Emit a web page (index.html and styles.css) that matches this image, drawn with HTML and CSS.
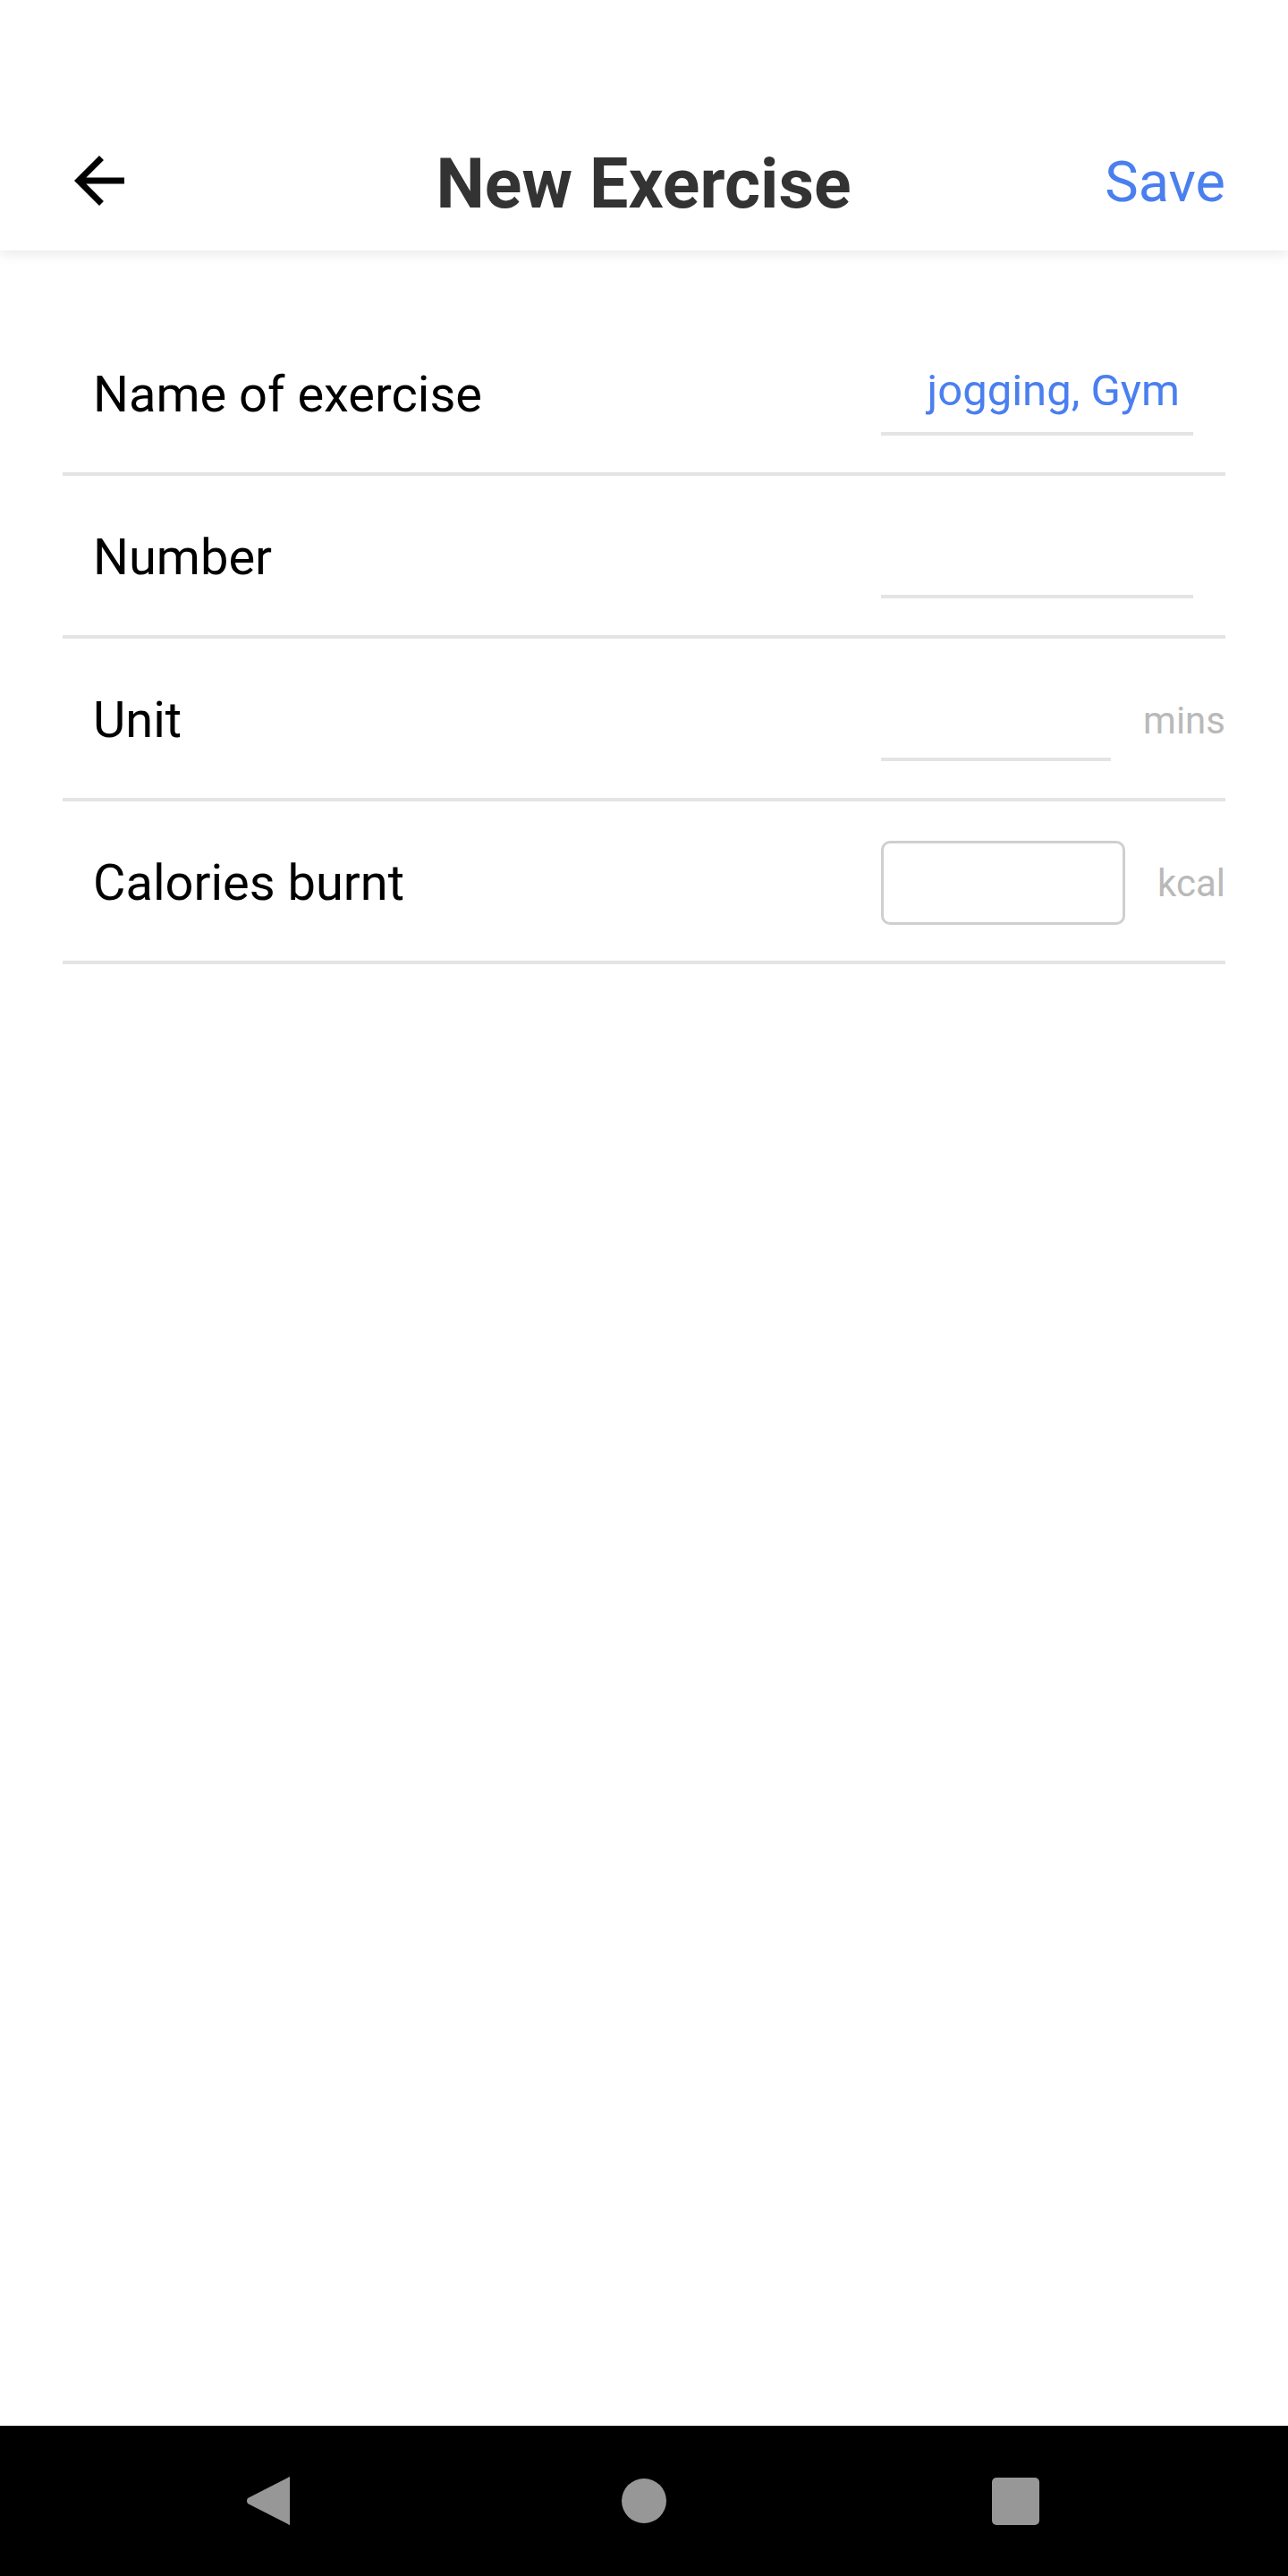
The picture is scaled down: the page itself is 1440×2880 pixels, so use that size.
FILE: index.html
```html
<!DOCTYPE html>
<html lang="en">
<head>
<meta charset="utf-8">
<title>New Exercise</title>
<link rel="stylesheet" href="styles.css">
</head>
<body>
<div class="screen">
  <header class="appbar">
    <button class="back" aria-label="Back">
      <svg viewBox="0 0 24 24" width="84" height="84"><path d="M20 11H7.83l5.59-5.59L12 4l-8 8 8 8 1.41-1.41L7.83 13H20v-2z" fill="#000"/></svg>
    </button>
    <h1 class="title">New Exercise</h1>
    <span class="save">Save</span>
  </header>
  <main class="form">
    <div class="row">
      <span class="label">Name of exercise</span>
      <div class="field pad">
        <input class="line" type="text" placeholder="jogging, Gym">
      </div>
    </div>
    <div class="row">
      <span class="label">Number</span>
      <div class="field pad">
        <input class="line" type="text">
      </div>
    </div>
    <div class="row">
      <span class="label">Unit</span>
      <div class="field">
        <input class="line" type="text">
        <span class="unit">mins</span>
      </div>
    </div>
    <div class="row">
      <span class="label">Calories burnt</span>
      <div class="field">
        <input class="box" type="text">
        <span class="unit">kcal</span>
      </div>
    </div>
  </main>
  <nav class="navbar">
    <svg class="nav-back" viewBox="0 0 50 56" width="50" height="56"><path d="M49 2 L49 54 Q49 56 47 54 L2 31 Q0 28 2 25 L47 2 Q49 0 49 2 Z" fill="#979797"/></svg>
    <span class="nav-home"></span>
    <span class="nav-recent"></span>
  </nav>
</div>
</body>
</html>
```

FILE: styles.css
```css
* { box-sizing: border-box; }
html, body { margin: 0; padding: 0; background: #fff; }
body { font-family: Roboto, "Noto Sans", "Liberation Sans", sans-serif; }

.screen {
  width: 1440px;
  min-height: 2880px;
  display: flex;
  flex-direction: column;
}

.appbar {
  height: 280px;
  padding: 124px 70px 0 69px;
  display: grid;
  grid-template-columns: 1fr auto 1fr;
  align-items: center;
  background: #fff;
  box-shadow: 0 4px 14px rgba(0,0,0,0.09);
  position: relative;
  z-index: 1;
}
.back {
  justify-self: start;
  border: 0;
  background: none;
  padding: 0;
  width: 84px;
  height: 84px;
  display: block;
}
.back svg { display: block; }
.title {
  margin: 8px 0 0;
  font-size: 77px;
  font-weight: 700;
  color: #333;
  line-height: 1;
}
.save {
  justify-self: end;
  margin-top: 2px;
  font-size: 63px;
  color: #4a7fef;
  line-height: 1;
}

.form {
  flex: 1;
  margin-top: 70px;
  padding: 0 70px;
}
.row {
  height: 182px;
  padding: 4px 36px 0 34px;
  border-bottom: 4px solid #e4e4e4;
  display: flex;
  align-items: center;
}
.label {
  flex: 1;
  font-size: 56px;
  color: #000;
}
.field {
  width: 385px;
  margin-right: -36px;
  display: flex;
  align-items: center;
  gap: 36px;
}
.field.pad { padding-right: 36px; }
.line, .box {
  flex: 1;
  min-width: 0;
  margin: 0;
  font-family: inherit;
  font-size: 49px;
  color: #4a7fef;
  background: transparent;
  outline: none;
  text-align: right;
}
.line {
  height: 92px;
  border: 0;
  border-bottom: 4px solid #e4e4e4;
  padding: 0 15px 6px 0;
}
.line::placeholder { color: #4a7fef; opacity: 1; }
.box {
  height: 94px;
  border: 3px solid #cfcfcf;
  border-radius: 10px;
  padding: 0 12px;
}
.unit {
  font-size: 42px;
  color: #b9b9b9;
}

.navbar {
  height: 168px;
  padding-left: 275px;
  background: #000;
  display: flex;
  align-items: center;
}
.nav-back { display: block; }
.nav-home {
  width: 50px;
  height: 50px;
  border-radius: 50%;
  background: #979797;
  margin-left: 370px;
}
.nav-recent {
  width: 53px;
  height: 53px;
  border-radius: 5px;
  background: #979797;
  margin-left: 364px;
}
```
